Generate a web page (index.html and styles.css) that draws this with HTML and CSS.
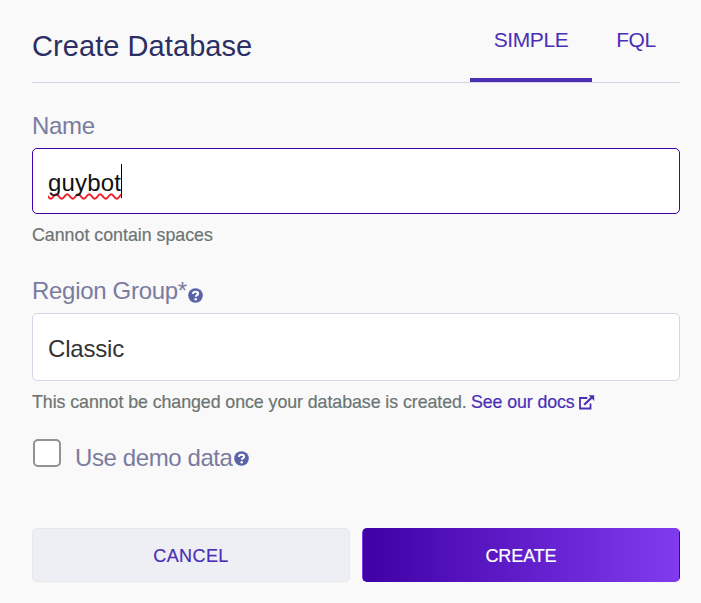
FILE: index.html
```html
<!DOCTYPE html>
<html lang="en">
<head>
<meta charset="utf-8">
<title>Create Database</title>
<link rel="stylesheet" href="styles.css">
</head>
<body>
<form class="dialog">
  <header class="header">
    <h1 class="title">Create Database</h1>
    <nav class="tabs">
      <a class="tab tab-active">SIMPLE</a>
      <a class="tab tab-fql">FQL</a>
    </nav>
  </header>

  <div class="label">Name</div>
  <div class="field field-focus"><span class="value">guybot</span><span class="caret"></span></div>
  <div class="hint hint-name">Cannot contain spaces</div>

  <div class="label label-region"><span>Region Group*</span><svg class="help" viewBox="0 0 16 16"><circle cx="8" cy="8" r="7.8" fill="currentColor"/><path d="M5.2 6.3C5.4 4.7 6.5 3.9 8 3.9c1.6 0 2.8.8 2.8 2.1 0 1.7-2.5 1.7-2.5 3.4" fill="none" stroke="#fff" stroke-width="2.2"/><circle cx="8.2" cy="11.9" r="1.35" fill="#fff"/></svg></div>
  <div class="field field-select"><span class="choice">Classic</span></div>
  <div class="hint hint-region"><span class="hint-text">This cannot be changed once your database is created.</span><a class="link">See our docs</a><svg class="external" viewBox="0 0 16 15"><path d="M8.3 3H1v10.5h10.5V8.5" fill="none" stroke="currentColor" stroke-width="1.8"/><path d="M5.2 9.8 13 2.2" fill="none" stroke="currentColor" stroke-width="2.2"/><path d="M9.6.3h5.6v5.6z" fill="currentColor"/></svg></div>

  <div class="demo">
    <span class="checkbox"></span>
    <span class="label demo-label"><span>Use demo data</span><svg class="help" viewBox="0 0 16 16"><circle cx="8" cy="8" r="7.8" fill="currentColor"/><path d="M5.2 6.3C5.4 4.7 6.5 3.9 8 3.9c1.6 0 2.8.8 2.8 2.1 0 1.7-2.5 1.7-2.5 3.4" fill="none" stroke="#fff" stroke-width="2.2"/><circle cx="8.2" cy="11.9" r="1.35" fill="#fff"/></svg></span>
  </div>

  <div class="actions">
    <button type="button" class="button cancel">CANCEL</button>
    <button type="button" class="button create">CREATE</button>
  </div>
</form>
</body>
</html>
```
FILE: styles.css
```css
* { box-sizing: border-box; }
body {
  margin: 0;
  background: #f9f9f9;
  font-family: "Liberation Sans", Arial, sans-serif;
}
.dialog {
  width: 701px;
  height: 603px;
  padding: 0 21px 0 32px;
  display: flex;
  flex-direction: column;
  white-space: nowrap;
}
.header {
  height: 83px;
  flex: none;
  display: flex;
  justify-content: space-between;
  border-bottom: 1px solid #d8d5ea;
}
.title {
  margin: 29px 0 0;
  font-size: 29px;
  line-height: 34px;
  font-weight: 400;
  letter-spacing: 0.07px;
  color: #2c2f63;
}
.tabs { display: flex; }
.tab {
  padding-top: 28px;
  width: 122px;
  font-size: 21px;
  line-height: 24px;
  text-align: center;
  color: #4a2fb5;
  letter-spacing: -0.4px;
}
.tab-active { border-bottom: 4px solid #4a2fb5; }
.tab-fql { width: 88px; }
.label {
  height: 28px;
  margin-top: 29px;
  font-size: 24px;
  line-height: 28px;
  letter-spacing: -0.3px;
  color: #7a7c9f;
  display: flex;
}
.label-region { margin-top: 31px; }
.field {
  height: 66px;
  margin-top: 8px;
  padding-left: 15px;
  border: 1px solid #d8d5ea;
  border-radius: 5px;
  background: #fff;
  display: flex;
  align-items: center;
  font-size: 24px;
}
.field-focus { border-color: #4100a8; color: #111; }
.field-select { height: 68px; color: #333; }
.value {
  letter-spacing: 0.15px;
  margin-top: 4px;
  text-decoration: underline wavy #f21d2b 1.5px;
  text-decoration-skip-ink: none;
  text-underline-offset: 2px;
}
.caret { width: 1px; height: 34px; background: #000; }
.choice { margin-top: 4px; letter-spacing: -0.2px; }
.hint {
  height: 22px;
  font-size: 17.8px;
  line-height: 22px;
  color: #6c7573;
  -webkit-text-stroke: 0.2px currentColor;
}
.hint-name { margin-top: 10px; }
.hint-region { margin-top: 10px; display: flex; }
.hint-text { width: 439px; letter-spacing: -0.06px; }
.link, .external { color: #4a2fb5; }
.link { letter-spacing: -0.1px; }
.external { width: 16px; height: 15px; margin: 4px 0 0 4px; }
.help { width: 15px; height: 15px; margin: 11px 0 0 1px; color: #5963a7; }
.demo { display: flex; margin-top: 26px; height: 40px; }
.checkbox {
  width: 28px;
  height: 28px;
  margin: 0 14px 0 1px;
  border: 2px solid #929292;
  border-radius: 5px;
  background: #fff;
}
.demo-label { margin-top: 5px; letter-spacing: -0.4px; }
.demo-label .help { margin: 7px 0 0 1px; }
.actions {
  display: grid;
  grid-template-columns: 318px 318px;
  gap: 12px;
  margin-top: 49px;
}
.button {
  height: 54px;
  padding: 2px 0 0;
  border: 1px solid #e7e8ef;
  border-radius: 5px;
  font: 18px/22px "Liberation Sans", Arial, sans-serif;
  -webkit-text-stroke: 0.2px currentColor;
}
.cancel { background: #eeeff5; color: #4a2fb5; letter-spacing: 0.4px; }
.create {
  border-color: transparent;
  background: linear-gradient(90deg, #3f00a5, #813bef);
  color: #fff;
  letter-spacing: -0.1px;
}
```
